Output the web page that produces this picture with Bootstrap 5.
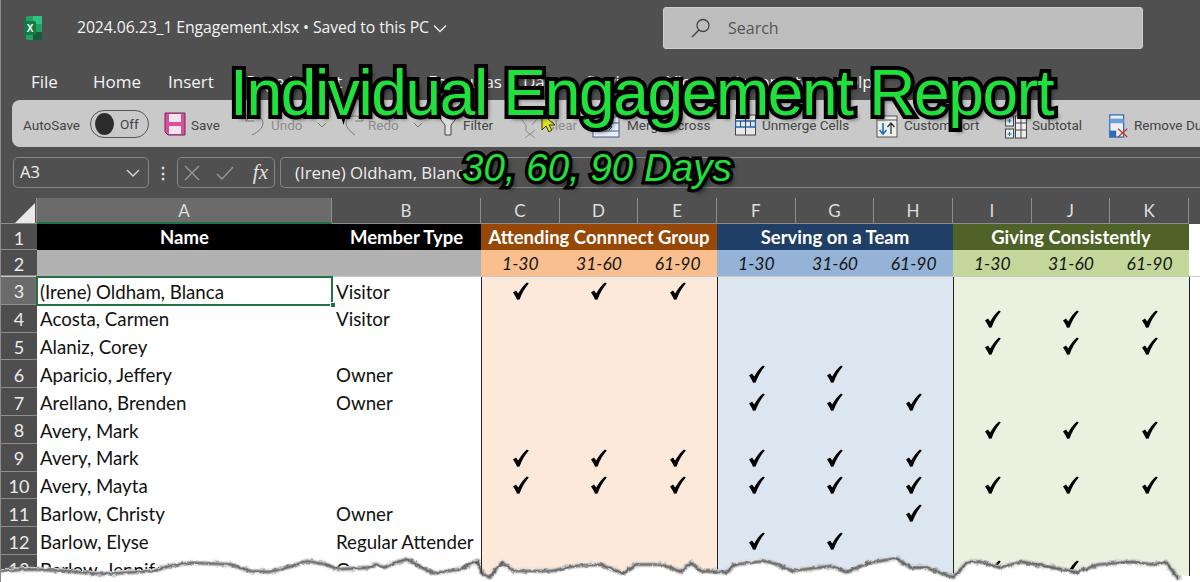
<!DOCTYPE html>
<html lang="en"><head><meta charset="utf-8"><title>Individual Engagement Report</title>
<link href="https://cdn.jsdelivr.net/npm/bootstrap@5.3.0/dist/css/bootstrap.min.css" rel="stylesheet">
<style>
html,body{height:582px;overflow:hidden;background:#fff}
.shot{position:relative;width:1200px;height:582px;overflow:hidden;background:#505050;font-family:"Open Sans",sans-serif;color:#f0f0f0;border-left:1px solid #8c8c8c}
.tbar{height:56px}
.logo{margin-left:23px;width:18px;height:24px}
.fname{margin-left:35px;font-size:15.8px;letter-spacing:-.1px;white-space:nowrap;color:#f2f2f2}
.sbox{position:absolute;left:662px;top:7px;width:480px;height:42px;background:#bdbdbd;border-radius:3px;border:1px solid #cfcfcf;color:#555;font-size:16px}
.sbox svg{margin-left:27px;margin-right:17px}
.tabs{height:44px;font-size:17px;color:#f4f4f4}
.tabs span{position:absolute;top:69px}
.ribn{height:47px;margin-left:11px;background:#c9c9c9;border-radius:8px 0 0 8px}
.rit{position:absolute;top:115px;font-family:Roboto,sans-serif;font-size:13.5px;color:#444;white-space:nowrap}
.rit.dim{color:#8c8c8c}
.ric{position:absolute;top:108px}
.tog{position:absolute;left:89px;top:110px;width:59px;height:28px;border:1px solid #555;border-radius:14px;color:#444;font-size:13.5px;font-family:Roboto,sans-serif}
.tog i{display:block;width:19px;height:22px;border-radius:50%;background:#2b2b2b;margin-left:4px;margin-right:6px}
.fbar{height:41px;padding:10px 0 0 12px}
.nbox{width:136px;height:31px;border:1px solid #858585;border-radius:5px;font-size:16.500px;padding:0 8px 0 6px}
.vdots{width:28px;font-size:16px;color:#ddd;line-height:1}
.fxbx{width:98px;height:31px;border:1px solid #858585;border-radius:5px;margin-right:5px;padding:0 6px}
.fxtxt{font-family:"Liberation Serif",serif;font-style:italic;font-size:21px;color:#e0e0e0;margin-left:auto}
.fmla{flex:1;height:31px;border:1px solid #858585;border-right:0;border-radius:5px 0 0 5px;font-size:16.800px;padding-left:14px;color:#eee;white-space:nowrap;overflow:hidden}
.sheet{font-family:Lato,sans-serif;font-size:18.700px;line-height:1}
.xr{display:grid;grid-template-columns:36px 295px 149px repeat(9,78.67px) 1fr;height:27.8px}
.xr>div{display:flex;align-items:center;min-width:0;white-space:nowrap}
.ch{height:26px;margin-top:10px;background:#505050;color:#dedede;font-size:17px}
.ch>div{justify-content:center;border-right:1px solid #8d8d8d;border-bottom:1px solid #8d8d8d}
.ch>.cur{background:#6b6b6b;border-bottom:2px solid #217346}
.ch>.cnr{background:#505050;padding:3px 1px 0 0;justify-content:flex-end;align-items:flex-end}
.ch>.end{background:#505050;border:0}
.xr>.rh{background:#4e4e4e;color:#ebebeb;justify-content:center;border-bottom:1px solid #8d8d8d;font-size:18px;padding-top:2px}
.xr>.rh.cur{background:#6b6b6b}
.h1r{height:26px;font-weight:700;color:#fff;font-size:18.500px}
.h2r{height:27px;font-style:italic;color:#151515;font-size:17.5px;border-bottom:1px solid #c8c8c8}
.h2r>div,.h1r>div{justify-content:center}
.h2r>div{padding-top:2px}
.nm{background:#fff;color:#111;padding:2px 0 0 3px}
.tp{background:#fff;color:#111;padding:2px 0 0 4px}
.o{background:#fde9d9;justify-content:center;border-left:1px solid #222}
.u{background:#dce6f1;justify-content:center;border-left:1px solid #222}
.g{background:#ebf1de;justify-content:center;border-left:1px solid #222}
.o+.o,.u+.u,.g+.g{border-left:0}
.e{background:#fff;border-left:1px solid #222}
.tk{width:17px;height:18px}
.xr>.h1a{background:#000}.xr>.h2a{background:#b1b1b1}
.xr>.h1o{background:#974706}.xr>.h1u{background:#1f3f66}.xr>.h1g{background:#4f6228}
.xr>.h2o{background:#fabf8f}.xr>.h2u{background:#95b3d7}.xr>.h2g{background:#c4d79b}
.xr>.eh{background:#fff}
.xr>.sel{position:relative;outline:2px solid #217346;outline-offset:-1px}
.hndl{position:absolute;right:-4px;bottom:-3px;width:6px;height:6px;background:#217346;border:1px solid #fff}
.ttl{position:absolute;font-family:"Liberation Sans",Arial,sans-serif;color:#20e03b;paint-order:stroke fill;-webkit-text-stroke:8px #000;text-shadow:4px 4px 4px rgba(0,0,0,.65);white-space:nowrap;line-height:1}
.ttl1{top:61px;left:229px;font-size:64px;letter-spacing:-1.35px}
.ttl2{top:149px;left:461px;font-size:38.500px;font-style:italic;-webkit-text-stroke:7px #000}
.curs{position:absolute;left:540px;top:113px}
.tear{position:absolute;left:-1px;top:542px;width:1200px;height:40px}
</style></head><body>
<svg width="0" height="0" class="position-absolute"><defs>
<symbol id="ck" viewBox="0 0 17 18"><path d="M1 10.5 4 8.6 6.2 11.6C8.4 7.2 11.6 3.2 15 .5L16.8 1.6C13 5.8 9.8 11.6 7.6 17.6L5 17.8C4 15 2.600 12.600 1 10.5Z" fill="#000"/></symbol>
<filter id="rough" x="-2%" y="-40%" width="104%" height="180%"><feTurbulence type="fractalNoise" baseFrequency=".2" numOctaves="2" seed="4"/><feDisplacementMap in="SourceGraphic" scale="4" yChannelSelector="G"/></filter>
<filter id="blr"><feGaussianBlur stdDeviation="1"/></filter>
</defs></svg>
<div class="shot">
 <div class="tbar d-flex align-items-center">
  <svg class="logo" viewBox="0 0 18 24"><rect x="2" y="0" width="16" height="24" rx="2" fill="#21a366"/><rect x="9" y="0" width="9" height="8" fill="#33c481" /><rect x="9" y="16" width="9" height="8" fill="#185c37"/><rect x="0" y="5" width="12" height="14" rx="1.5" fill="#107c41"/><text x="6" y="16" text-anchor="middle" font-size="10" font-weight="700" fill="#fff" font-family="Liberation Sans">X</text></svg>
  <span class="fname">2024.06.23_1 Engagement.xlsx • Saved to this PC</span>
  <svg class="ms-1" width="14" height="9" viewBox="0 0 14 9"><path d="M1 1.5 7 7.5 13 1.5" fill="none" stroke="#eee" stroke-width="1.3"/></svg>
  <div class="sbox d-flex align-items-center"><svg width="20" height="20" viewBox="0 0 20 20"><circle cx="12" cy="7.5" r="6" fill="none" stroke="#444" stroke-width="1.3"/><path d="M8 12 1 19" stroke="#444" stroke-width="1.4"/></svg><span>Search</span></div>
 </div>
 <div class="tabs"><span style="left:30px">File</span><span style="left:92px">Home</span><span style="left:167px">Insert</span><span style="left:245px">Page Layout</span><span style="left:427px">Formulas</span><span style="left:522px">Data</span><span style="left:586px">Review</span><span style="left:666px">View</span><span style="left:731px">Automate</span><span style="left:835px">Help</span></div>
 <div class="ribn"></div>
 <span class="rit" style="left:22px">AutoSave</span>
 <div class="tog d-flex align-items-center"><i></i><span>Off</span></div>
 <svg class="ric" style="left:163px;top:112px" width="22" height="24" viewBox="0 0 22 24"><path d="M1 1H21V23H4L1 20Z" fill="#d94f9e" stroke="#7a2458"/><rect x="5" y="2" width="12" height="8" fill="#f2e4ec"/><rect x="5" y="14" width="12" height="8" fill="#f2e4ec"/></svg>
 <span class="rit" style="left:190px">Save</span>
 <svg class="ric" style="left:243px;top:112px" width="24" height="24" viewBox="0 0 24 24" fill="none" stroke="#777"><path d="M2 2V9H10M2 9C8 1 18 3 19 11 19 16 14 20 8 23"/></svg>
 <span class="rit dim" style="left:270px">Undo</span>
 <svg class="ric" style="left:316px;top:122px" width="10" height="6" viewBox="0 0 10 6"><path d="M1 1 5 5 9 1" fill="none" stroke="#777"/></svg>
 <svg class="ric" style="left:340px;top:112px" width="24" height="24" viewBox="0 0 24 24" fill="none" stroke="#777"><path d="M22 2V9H14M22 9C16 1 6 3 5 11 5 16 10 20 14 23"/></svg>
 <span class="rit dim" style="left:367px">Redo</span>
 <svg class="ric" style="left:412px;top:122px" width="10" height="6" viewBox="0 0 10 6"><path d="M1 1 5 5 9 1" fill="none" stroke="#777"/></svg>
 <svg class="ric" style="left:435px;top:114px" width="24" height="22" viewBox="0 0 24 22" fill="none" stroke="#444"><path d="M1 1H23L15 11V21H9V11Z" fill="#ddd"/></svg>
 <span class="rit" style="left:462px">Filter</span>
 <svg class="ric" style="left:516px;top:114px" width="24" height="24" viewBox="0 0 24 24" fill="none" stroke="#8c8c8c"><path d="M1 1H23L15 11M1 1 9 11V16M8 16 18 24M18 16 8 24"/></svg>
 <span class="rit dim" style="left:545px">Clear</span>
 <svg class="curs" width="18" height="20" viewBox="0 0 18 20"><path d="M1 1V17L5 13 8 19 11 17 8 12H14Z" fill="#d9e021" stroke="#3a3a00"/></svg>
 <svg class="ric" style="left:591px;top:116px" width="28" height="22" viewBox="0 0 28 22" fill="none" stroke="#3a5f8a"><rect x="1" y="1" width="26" height="20" fill="#eef"/><path d="M1 7H27M1 15H27"/><path d="M8 11H20M17 8 20 11 17 14" stroke="#1a6fc0"/></svg>
 <span class="rit" style="left:626px">Merge Across</span>
 <svg class="ric" style="left:734px;top:114px" width="21" height="22" viewBox="0 0 21 22" fill="none" stroke="#444"><rect x=".5" y="1" width="20" height="20" fill="#e8e8e8"/><rect x=".5" y="7" width="20" height="6" fill="#dbe8f6" stroke="#1a5fa8" stroke-width="1.4"/><path d="M10.5 1V21M5.5 7V13M15.5 7V13"/></svg>
 <span class="rit" style="left:761px">Unmerge Cells</span>
 <svg class="ric" style="left:875px;top:114px" width="22" height="24" viewBox="0 0 22 24" fill="none"><rect x="1" y="2" width="20" height="21" fill="#eee" stroke="#555"/><path d="M1 6H21" stroke="#555"/><path d="M7 9V20M3.5 16 7 20 10.500 16" stroke="#1a6fc0" stroke-width="1.6"/><path d="M15 20V9M11.500 13 15 9 18.500 13" stroke="#333" stroke-width="1.3"/></svg>
 <span class="rit" style="left:903px">Custom Sort</span>
 <svg class="ric" style="left:1004px;top:115px" width="22" height="24" viewBox="0 0 22 24" fill="none" stroke="#444"><rect x=".5" y="1" width="8" height="10" fill="#e6eef7"/><rect x=".5" y="14" width="8" height="9" fill="#e6eef7"/><rect x="10.500" y="1" width="11" height="22" fill="#eee"/><path d="M16 1V23M10 8H22M10 15H22"/><path d="M2.500 6H6.500M2.500 19H6.500M4.500 4V8M4.500 17V21" stroke="#1a6fc0"/></svg>
 <span class="rit" style="left:1031px">Subtotal</span>
 <svg class="ric" style="left:1107px;top:114px" width="22" height="24" viewBox="0 0 22 26" fill="none"><rect x="1" y="1" width="15" height="24" fill="#eee" stroke="#2f6db5" stroke-width="1.400"/><rect x="1" y="5" width="15" height="5" fill="#6a9fd8"/><rect x="1" y="18" width="7" height="7" fill="#2f6db5"/><path d="M10 16 20 25M20 16 10 25" stroke="#c0392b" stroke-width="1.400"/></svg>
 <span class="rit" style="left:1133px">Remove Duplicates</span>
 <div class="fbar d-flex align-items-center mt-0">
  <div class="nbox d-flex align-items-center justify-content-between"><span>A3</span><svg width="14" height="8" viewBox="0 0 14 8"><path d="M1 1 7 7 13 1" fill="none" stroke="#ddd" stroke-width="1.300"/></svg></div>
  <div class="vdots text-center fw-bold">⋮</div>
  <div class="fxbx d-flex align-items-center gap-3"><svg width="16" height="16" viewBox="0 0 16 16"><path d="M1 1 15 15M15 1 1 15" stroke="#9a9a9a" stroke-width="1.300"/></svg><svg width="18" height="14" viewBox="0 0 18 14"><path d="M1 8 6 13 17 1" fill="none" stroke="#9a9a9a" stroke-width="1.300"/></svg><span class="fxtxt">fx</span></div>
  <div class="fmla d-flex align-items-center"><span>(Irene) Oldham, Blanca</span></div>
 </div>
 <div class="sheet">
  <div class="xr ch"><div class="cnr"><svg width="20" height="20" viewBox="0 0 20 20"><path d="M20 0V20H0Z" fill="#e8e8e8"/></svg></div><div class="cur">A</div><div>B</div><div>C</div><div>D</div><div>E</div><div>F</div><div>G</div><div>H</div><div>I</div><div>J</div><div>K</div><div class="end"></div></div>
  <div class="xr h1r"><div class="rh fw-normal">1</div><div class="h1a">Name</div><div class="h1a">Member Type</div><div class="h1o" style="grid-column:span 3">Attending Connnect Group</div><div class="h1u" style="grid-column:span 3">Serving on a Team</div><div class="h1g" style="grid-column:span 3">Giving Consistently</div><div class="eh"></div></div>
  <div class="xr h2r"><div class="rh fw-normal fst-normal">2</div><div class="h2a"></div><div class="h2a"></div><div class="h2o">1-30</div><div class="h2o">31-60</div><div class="h2o">61-90</div><div class="h2u">1-30</div><div class="h2u">31-60</div><div class="h2u">61-90</div><div class="h2g">1-30</div><div class="h2g">31-60</div><div class="h2g">61-90</div><div class="eh"></div></div>
  <div class="xr"><div class="rh cur">3</div><div class="nm sel">(Irene) Oldham, Blanca<span class="hndl"></span></div><div class="tp">Visitor</div><div class="o"><svg class="tk"><use href="#ck"/></svg></div><div class="o"><svg class="tk"><use href="#ck"/></svg></div><div class="o"><svg class="tk"><use href="#ck"/></svg></div><div class="u"></div><div class="u"></div><div class="u"></div><div class="g"></div><div class="g"></div><div class="g"></div><div class="e"></div></div>
  <div class="xr"><div class="rh">4</div><div class="nm">Acosta, Carmen</div><div class="tp">Visitor</div><div class="o"></div><div class="o"></div><div class="o"></div><div class="u"></div><div class="u"></div><div class="u"></div><div class="g"><svg class="tk"><use href="#ck"/></svg></div><div class="g"><svg class="tk"><use href="#ck"/></svg></div><div class="g"><svg class="tk"><use href="#ck"/></svg></div><div class="e"></div></div>
  <div class="xr"><div class="rh">5</div><div class="nm">Alaniz, Corey</div><div class="tp"></div><div class="o"></div><div class="o"></div><div class="o"></div><div class="u"></div><div class="u"></div><div class="u"></div><div class="g"><svg class="tk"><use href="#ck"/></svg></div><div class="g"><svg class="tk"><use href="#ck"/></svg></div><div class="g"><svg class="tk"><use href="#ck"/></svg></div><div class="e"></div></div>
  <div class="xr"><div class="rh">6</div><div class="nm">Aparicio, Jeffery</div><div class="tp">Owner</div><div class="o"></div><div class="o"></div><div class="o"></div><div class="u"><svg class="tk"><use href="#ck"/></svg></div><div class="u"><svg class="tk"><use href="#ck"/></svg></div><div class="u"></div><div class="g"></div><div class="g"></div><div class="g"></div><div class="e"></div></div>
  <div class="xr"><div class="rh">7</div><div class="nm">Arellano, Brenden</div><div class="tp">Owner</div><div class="o"></div><div class="o"></div><div class="o"></div><div class="u"><svg class="tk"><use href="#ck"/></svg></div><div class="u"><svg class="tk"><use href="#ck"/></svg></div><div class="u"><svg class="tk"><use href="#ck"/></svg></div><div class="g"></div><div class="g"></div><div class="g"></div><div class="e"></div></div>
  <div class="xr"><div class="rh">8</div><div class="nm">Avery, Mark</div><div class="tp"></div><div class="o"></div><div class="o"></div><div class="o"></div><div class="u"></div><div class="u"></div><div class="u"></div><div class="g"><svg class="tk"><use href="#ck"/></svg></div><div class="g"><svg class="tk"><use href="#ck"/></svg></div><div class="g"><svg class="tk"><use href="#ck"/></svg></div><div class="e"></div></div>
  <div class="xr"><div class="rh">9</div><div class="nm">Avery, Mark</div><div class="tp"></div><div class="o"><svg class="tk"><use href="#ck"/></svg></div><div class="o"><svg class="tk"><use href="#ck"/></svg></div><div class="o"><svg class="tk"><use href="#ck"/></svg></div><div class="u"><svg class="tk"><use href="#ck"/></svg></div><div class="u"><svg class="tk"><use href="#ck"/></svg></div><div class="u"><svg class="tk"><use href="#ck"/></svg></div><div class="g"></div><div class="g"></div><div class="g"></div><div class="e"></div></div>
  <div class="xr"><div class="rh">10</div><div class="nm">Avery, Mayta</div><div class="tp"></div><div class="o"><svg class="tk"><use href="#ck"/></svg></div><div class="o"><svg class="tk"><use href="#ck"/></svg></div><div class="o"><svg class="tk"><use href="#ck"/></svg></div><div class="u"><svg class="tk"><use href="#ck"/></svg></div><div class="u"><svg class="tk"><use href="#ck"/></svg></div><div class="u"><svg class="tk"><use href="#ck"/></svg></div><div class="g"><svg class="tk"><use href="#ck"/></svg></div><div class="g"><svg class="tk"><use href="#ck"/></svg></div><div class="g"><svg class="tk"><use href="#ck"/></svg></div><div class="e"></div></div>
  <div class="xr"><div class="rh">11</div><div class="nm">Barlow, Christy</div><div class="tp">Owner</div><div class="o"></div><div class="o"></div><div class="o"></div><div class="u"></div><div class="u"></div><div class="u"><svg class="tk"><use href="#ck"/></svg></div><div class="g"></div><div class="g"></div><div class="g"></div><div class="e"></div></div>
  <div class="xr"><div class="rh">12</div><div class="nm">Barlow, Elyse</div><div class="tp">Regular Attender</div><div class="o"></div><div class="o"></div><div class="o"></div><div class="u"><svg class="tk"><use href="#ck"/></svg></div><div class="u"><svg class="tk"><use href="#ck"/></svg></div><div class="u"></div><div class="g"></div><div class="g"></div><div class="g"></div><div class="e"></div></div>
  <div class="xr"><div class="rh">13</div><div class="nm">Barlow, Jennifer</div><div class="tp">Owner</div><div class="o"></div><div class="o"></div><div class="o"></div><div class="u"></div><div class="u"></div><div class="u"></div><div class="g"><svg class="tk"><use href="#ck"/></svg></div><div class="g"><svg class="tk"><use href="#ck"/></svg></div><div class="g"><svg class="tk"><use href="#ck"/></svg></div><div class="e"></div></div>
 </div>
 <div class="ttl ttl1">Individual Engagement Report</div>
 <div class="ttl ttl2">30, 60, 90 Days</div>
 <svg class="tear" viewBox="0 0 1200 40" overflow="visible">
  <g filter="url(#rough)" transform="translate(0 -5.400) scale(1 .871)">
   <path fill="#fff" d="M-5 36.500 31 34.500 65 36.500 99.500 40 115 39 153 36.500 168 30.700 191 27 230 29 249 36.500 268 37.600 291 30.700 306 25 325 29 337 34.500 367 32.600 375 29 383 32.600 394 27 406 23 421 32.600 432 39 459 34.500 476 25 482 40 488 44 501 27 513 36.500 551 36.500 574 30.700 600 29 611 34.500 623 39.500 634 29 661 29 680 37.600 690 27 700 36.500 726 38 734 29 765 25 776 29 791 36.500 830 30.700 845 37.600 868 27 895 22 910 32.600 925 32.600 952 44 967 26 979 26 998 32.600 1021 26 1052 32.600 1075 38 1097.500 29 1132 26 1151 29 1164.500 26 1178 46 1205 44V70H-5Z"/>
   <path filter="url(#blr)" transform="translate(1 3)" fill="none" stroke="#3a3a3a" stroke-width="3" d="M-5 36.500 31 34.500 65 36.500 99.500 40 115 39 153 36.500 168 30.700 191 27 230 29 249 36.500 268 37.600 291 30.700 306 25 325 29 337 34.500 367 32.600 375 29 383 32.600 394 27 406 23 421 32.600 432 39 459 34.500 476 25 482 40 488 44 501 27 513 36.500 551 36.500 574 30.700 600 29 611 34.500 623 39.500 634 29 661 29 680 37.600 690 27 700 36.500 726 38 734 29 765 25 776 29 791 36.500 830 30.700 845 37.600 868 27 895 22 910 32.600 925 32.600 952 44 967 26 979 26 998 32.600 1021 26 1052 32.600 1075 38 1097.500 29 1132 26 1151 29 1164.500 26 1178 46"/>
  </g>
 </svg>
</div>
<script src="https://cdn.jsdelivr.net/npm/bootstrap@5.3.0/dist/js/bootstrap.bundle.min.js"></script>
</body></html>
